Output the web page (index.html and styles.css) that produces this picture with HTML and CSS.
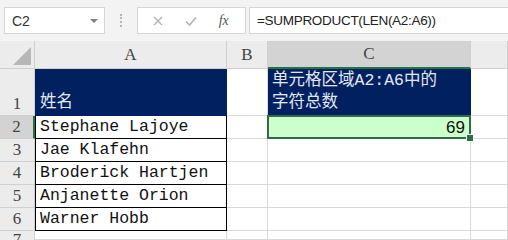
FILE: index.html
```html
<!DOCTYPE html>
<html>
<head>
  <title>SUMPRODUCT LEN</title>
  <link rel="stylesheet" href="styles.css">
</head>
<body>
  <div class="toolbar">
    <div class="namebox">
      <span>C2</span>
      <span class="arrow"></span>
    </div>
    <div class="grip"></div>
    <div class="buttons">
      <svg width="12" height="12" viewBox="0 0 12 12"><path d="M2 2 L10 10 M10 2 L2 10" stroke="#b3b3b3" stroke-width="1.4" fill="none"/></svg>
      <svg width="14" height="12" viewBox="0 0 14 12"><path d="M2 6.5 L5.5 10 L12 2.5" stroke="#b3b3b3" stroke-width="1.6" fill="none"/></svg>
      <span class="fx">fx</span>
    </div>
    <div class="formula">=SUMPRODUCT(LEN(A2:A6))</div>
  </div>

  <div class="sheet">
    <!-- column headers -->
    <div class="hdr corner">
      <svg width="18" height="18" viewBox="0 0 18 18"><path d="M18 0 L18 18 L0 18 Z" fill="#b7b7b7"/></svg>
    </div>
    <div class="hdr col">A</div>
    <div class="hdr col">B</div>
    <div class="hdr col active-col">C</div>
    <div class="hdr col"></div>

    <!-- row 1 -->
    <div class="hdr row">1</div>
    <div class="cell title tbl">姓名</div>
    <div class="cell"></div>
    <div class="cell title">单元格区域A2:A6中的<br>字符总数</div>
    <div class="cell"></div>

    <!-- row 2 -->
    <div class="hdr row active-row">2</div>
    <div class="cell tbl">Stephane Lajoye</div>
    <div class="cell"></div>
    <div class="cell result selected">69</div>
    <div class="cell"></div>

    <div class="hdr row">3</div>
    <div class="cell tbl">Jae Klafehn</div>
    <div class="cell"></div>
    <div class="cell"></div>
    <div class="cell"></div>

    <div class="hdr row">4</div>
    <div class="cell tbl">Broderick Hartjen</div>
    <div class="cell"></div>
    <div class="cell"></div>
    <div class="cell"></div>

    <div class="hdr row">5</div>
    <div class="cell tbl">Anjanette Orion</div>
    <div class="cell"></div>
    <div class="cell"></div>
    <div class="cell"></div>

    <div class="hdr row">6</div>
    <div class="cell tbl">Warner Hobb</div>
    <div class="cell"></div>
    <div class="cell"></div>
    <div class="cell"></div>

    <div class="hdr row last">7</div>
    <div class="cell"></div>
    <div class="cell"></div>
    <div class="cell"></div>
    <div class="cell"></div>
  </div>
</body>
</html>
```

FILE: styles.css
```css
body {
  margin: 0;
  width: 508px;
  height: 240px;
  overflow: hidden;
  background-color: #fff;
  font-family: "Liberation Sans", Arial, sans-serif;
}

.toolbar {
  display: flex;
  align-items: flex-start;
  height: 41px;
  padding-top: 7px;
  box-sizing: border-box;
  background-color: #f3f3f3;
}

.namebox {
  display: flex;
  align-items: center;
  justify-content: space-between;
  width: 101px;
  height: 27px;
  margin-left: 4px;
  padding: 0 6px 0 7px;
  box-sizing: border-box;
  background-color: #fff;
  border: 1px solid #d6d6d6;
  font-size: 14px;
  color: #333;
}

.arrow {
  width: 0;
  height: 0;
  border-left: 4px solid transparent;
  border-right: 4px solid transparent;
  border-top: 4px solid #808080;
}

.grip {
  width: 0;
  height: 13px;
  margin: 7px 15px 0 15px;
  border-left: 2px dotted #b5b5b5;
}

.buttons {
  display: flex;
  align-items: center;
  justify-content: space-around;
  width: 109px;
  height: 27px;
  padding: 0 6px 0 4px;
  box-sizing: border-box;
  background-color: #fff;
  border: 1px solid #d6d6d6;
}

.fx {
  font-family: "Liberation Serif", serif;
  font-style: italic;
  font-size: 14px;
  color: #555;
}

.formula {
  flex: 1;
  height: 27px;
  margin-left: 3px;
  padding-left: 7px;
  box-sizing: border-box;
  background-color: #fff;
  border: 1px solid #d6d6d6;
  border-right: none;
  line-height: 25px;
  font-size: 13.5px;
  letter-spacing: -0.3px;
  color: #222;
}

.sheet {
  display: grid;
  grid-template-columns: 35px 192px 41px 203px 37px;
  grid-template-rows: 28px 47px 23px 23px 23px 23px 23px 9px;
}

.hdr {
  display: flex;
  align-items: flex-end;
  justify-content: center;
  box-sizing: border-box;
  background-color: #ececec;
  border-right: 1px solid #d0d0d0;
  border-bottom: 1px solid #d0d0d0;
  font-family: "Liberation Serif", serif;
  font-size: 17px;
  color: #444;
  line-height: 22px;
}

.hdr.last {
  align-items: flex-start;
  overflow: hidden;
  border-bottom: none;
  line-height: 18px;
}

.corner {
  justify-content: flex-end;
  padding: 0 3px 3px 0;
}

.col {
  align-items: center;
}

.active-col {
  background-color: #d3d3d3;
  border-bottom: 2px solid #217346;
}

.active-row {
  background-color: #d3d3d3;
  border-right: 2px solid #217346;
}

.cell {
  display: flex;
  align-items: flex-end;
  box-sizing: border-box;
  padding-left: 4px;
  border-right: 1px solid #d9d9d9;
  border-bottom: 1px solid #d9d9d9;
  font-family: "Liberation Mono", "Noto Sans CJK SC", monospace;
  font-size: 16.5px;
  line-height: 22px;
  color: #111;
  white-space: nowrap;
}

.tbl {
  border-left: 1px solid #000;
  border-right: 1px solid #000;
  border-bottom: 1px solid #000;
}

.title {
  background-color: #002060;
  color: #e3e8f3;
  border-color: #002060;
  padding-bottom: 1px;
}

.result {
  justify-content: flex-end;
  padding-right: 5px;
  background-color: #ccffcc;
  font-family: "Liberation Sans", Arial, sans-serif;
  font-size: 17px;
  line-height: 21px;
}

.selected {
  position: relative;
}

.selected::before {
  content: "";
  position: absolute;
  left: -1px;
  top: -1px;
  right: -1px;
  bottom: -1px;
  border: 2px solid #2e6b46;
}

.selected::after {
  content: "";
  position: absolute;
  right: -4px;
  bottom: -4px;
  width: 6px;
  height: 6px;
  background-color: #2e6b46;
  border: 1px solid #fff;
}
```
